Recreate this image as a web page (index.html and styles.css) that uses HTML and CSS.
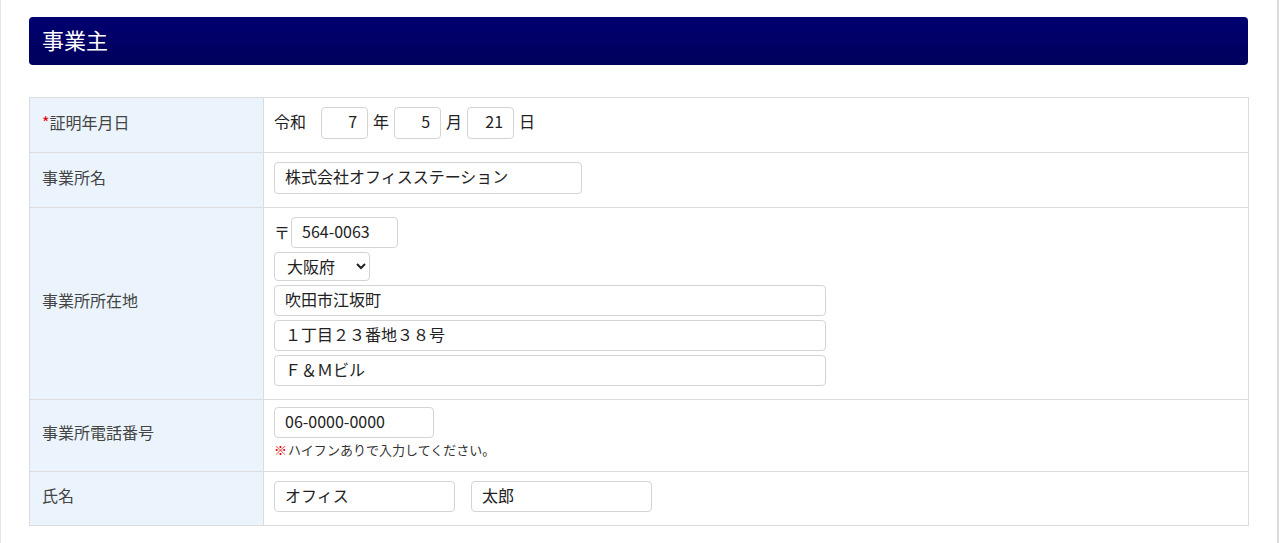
FILE: index.html
```html
<!DOCTYPE html>
<html lang="ja">
<head>
    <meta charset="UTF-8">
    <title>事業主</title>
    <link rel="stylesheet" href="styles.css">
</head>
<body>
    <div class="page">
        <h2 class="section-title">事業主</h2>
        <table class="form-table">
            <tr class="row-date">
                <th><span class="req">*</span>証明年月日</th>
                <td>
                    <div class="inline">
                        <span>令和</span>
                        <input class="num" type="text" value="7">
                        <span>年</span>
                        <input class="num" type="text" value="5">
                        <span>月</span>
                        <input class="num" type="text" value="21">
                        <span>日</span>
                    </div>
                </td>
            </tr>
            <tr class="row-office">
                <th>事業所名</th>
                <td><input class="w-office" type="text" value="株式会社オフィスステーション"></td>
            </tr>
            <tr class="row-address">
                <th>事業所所在地</th>
                <td>
                    <div class="stack">
                        <div class="zip"><span>〒</span><input class="w-zip" type="text" value="564-0063"></div>
                        <select class="pref">
                            <option>大阪府</option>
                        </select>
                        <input class="w-addr" type="text" value="吹田市江坂町">
                        <input class="w-addr" type="text" value="１丁目２３番地３８号">
                        <input class="w-addr" type="text" value="Ｆ＆Ｍビル">
                    </div>
                </td>
            </tr>
            <tr class="row-tel">
                <th>事業所電話番号</th>
                <td>
                    <input class="w-tel" type="text" value="06-0000-0000">
                    <p class="note"><span class="mark">※</span>ハイフンありで入力してください。</p>
                </td>
            </tr>
            <tr class="row-name">
                <th>氏名</th>
                <td>
                    <div class="names">
                        <input class="w-name" type="text" value="オフィス">
                        <input class="w-name" type="text" value="太郎">
                    </div>
                </td>
            </tr>
        </table>
    </div>
</body>
</html>
```

FILE: styles.css
```css
body {
    margin: 0;
    font-family: "Noto Sans CJK JP", "Noto Sans", sans-serif;
    color: #333;
    background: #fff;
}
.page {
    height: 543px;
    box-sizing: border-box;
    padding: 17px 29px 0 29px;
    border-left: 1px solid #e6e6e6;
    border-right: 2px solid #dcdcdc;
}
.section-title {
    margin: 0 0 32px -1px;
    height: 48px;
    line-height: 44px;
    padding: 0 13px;
    font-size: 22px;
    font-weight: normal;
    color: #fff;
    border-radius: 4px;
    background: linear-gradient(#000070, #00005c);
}
.form-table {
    width: 1220px;
    margin-left: -1px;
    border-collapse: collapse;
    border: 1px solid #dcdcdc;
    font-size: 16px;
}
.form-table th,
.form-table td {
    border: 1px solid #dcdcdc;
    padding: 0 10px 5px 12px;
}
.form-table td {
    padding-left: 10px;
    color: #222;
}
.form-table th {
    width: 211px;
    padding-bottom: 7px;
    background: #ebf4fc;
    text-align: left;
    font-weight: normal;
    color: #444;
}
.req {
    color: #e60000;
}
input,
select {
    font-family: "Noto Sans CJK JP", "Noto Sans", sans-serif;
    font-size: 16px;
    color: #222;
    box-sizing: border-box;
    height: 32px;
    border: 1px solid #d4d4d4;
    border-radius: 4px;
    padding: 0 10px 3px;
    background: #fff;
    margin: 0;
}
.row-date { height: 55px; }
.row-office { height: 55px; }
.row-address { height: 192px; }
.row-tel { height: 72px; }
.row-name { height: 54px; }
.inline {
    display: flex;
    align-items: center;
    gap: 5px;
}
.inline span {
    padding-bottom: 3px;
}
.inline span:first-child {
    margin-right: 10px;
}
.num {
    width: 47px;
    text-align: right;
}
.w-office { width: 308px; }
.stack {
    display: flex;
    flex-direction: column;
    align-items: flex-start;
    gap: 4px;
    padding: 1px 0;
}
.zip {
    display: flex;
    align-items: center;
    gap: 1px;
}
.w-zip { width: 107px; height: 31px; }
.pref {
    width: 96px;
    height: 29px;
    padding: 0 4px 2px 8px;
}
.w-addr {
    width: 552px;
    height: 31px;
}
.w-tel { width: 160px; height: 31px; }
.note {
    margin: 2px 0 0;
    font-size: 13px;
    color: #333;
}
.mark {
    color: #e60000;
    font-weight: bold;
    margin-right: 1px;
}
.names {
    display: flex;
    gap: 16px;
}
.w-name { width: 181px; height: 31px; }
```
